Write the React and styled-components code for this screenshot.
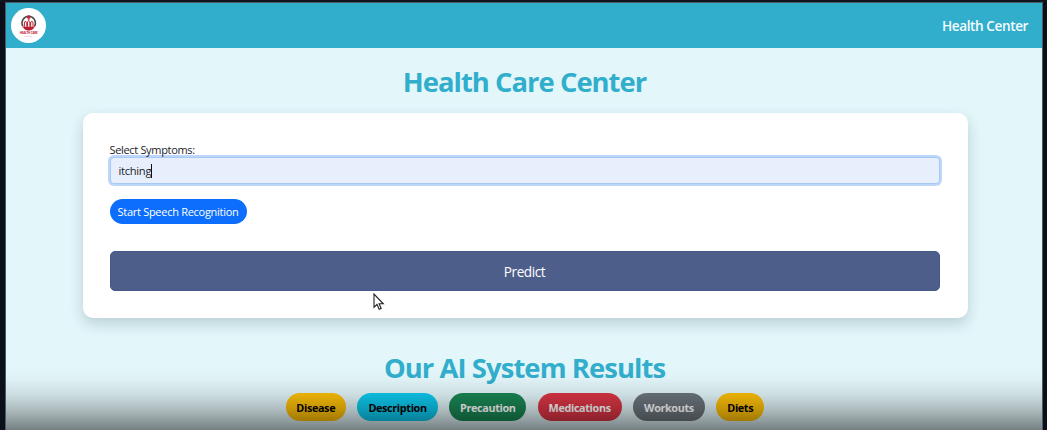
import React from "react";
import styled, { createGlobalStyle } from "styled-components";

const GlobalStyle = createGlobalStyle`
  *, *::before, *::after { box-sizing: border-box; }
  body {
    margin: 0;
    background: #0b0f19;
    font-family: "Segoe UI", "Open Sans", "Noto Sans", sans-serif;
    color: #212529;
  }
`;

const Frame = styled.div`
  height: 430px;
  padding: 0 4px 0 5px;
  border-top: 2px solid #10141f;
  overflow: hidden;
`;

const Page = styled.div`
  position: relative;
  height: 428px;
  background: #e3f6fa;
  border: solid #4a5a66;
  border-width: 1px 1px 0 1px;
  overflow: hidden;
`;

const Navbar = styled.header`
  display: flex;
  align-items: center;
  justify-content: space-between;
  height: 45px;
  padding: 0 14px 0 5px;
  background: #32aecd;
`;

const LogoBadge = styled.div`
  width: 35px;
  height: 35px;
  border-radius: 50%;
  background: #fff;
`;

const Brand = styled.span`
  color: #f4fcfe;
  font-size: 13.6px;
  font-weight: 600;
  line-height: 20px;
  letter-spacing: -0.42px;
  padding-top: 1px;
`;

const Heading = styled.h1`
  margin: 0;
  padding-left: 1px;
  color: #32aecd;
  font-size: 27.4px;
  font-weight: 700;
  line-height: 34px;
  text-align: center;
  white-space: nowrap;
  letter-spacing: ${(p) => p.$track || 0}px;
`;

const Main = styled.main`
  display: flex;
  flex-direction: column;
  align-items: center;
  padding-top: 17px;
`;

const Card = styled.form`
  display: flex;
  flex-direction: column;
  align-items: stretch;
  width: 885px;
  height: 205px;
  margin: 14px 0 33px 2px;
  padding: 29px 28px 27px 27px;
  border-radius: 10px;
  background: #fff;
  box-shadow: 0 6px 14px rgba(20, 60, 70, 0.2);
`;

const Label = styled.label`
  position: relative;
  z-index: 1;
  font-size: 11px;
  line-height: 15px;
  letter-spacing: -0.33px;
`;

const Field = styled.div`
  display: flex;
  align-items: center;
  height: 27px;
  padding: 0 8px;
  border: 1px solid #a8c8f6;
  border-radius: 4px;
  background: #e8effc;
  box-shadow: 0 0 0 2px #bdd7fb;
  font-size: 11.2px;
  letter-spacing: -0.3px;
`;

const Caret = styled.span`
  width: 1px;
  height: 14px;
  background: #111;
`;

const SpeechButton = styled.button`
  align-self: flex-start;
  width: 137px;
  height: 25px;
  margin-top: 15px;
  padding: 0;
  border: 0;
  border-radius: 13px;
  background: #0d6efd;
  color: #fff;
  font: 400 11px/25px "Segoe UI", "Open Sans", sans-serif;
  letter-spacing: -0.28px;
  white-space: nowrap;
`;

const PredictButton = styled.button`
  height: 40px;
  margin-top: 27px;
  padding: 1px 0 0;
  border: 1px solid #46578a;
  border-radius: 5px;
  background: #4d5e8b;
  color: #fff;
  font: 400 13.6px/37px "Segoe UI", "Open Sans", sans-serif;
  letter-spacing: -0.45px;
`;

const ResultTabs = styled.nav`
  display: flex;
  gap: 11.3px;
  margin: 8px 0 0 2px;
`;

const ResultTab = styled.button`
  width: ${(p) => p.$width}px;
  height: 28px;
  padding: 1px 0 0;
  border: 0;
  border-radius: 14px;
  background: ${(p) => p.$bg};
  color: ${(p) => p.$color};
  font: 700 10.8px/27px "Segoe UI", "Open Sans", sans-serif;
  letter-spacing: -0.35px;
  white-space: nowrap;
`;

const BottomShade = styled.div`
  position: absolute;
  inset: auto 0 0 0;
  height: 64px;
  background: linear-gradient(
    rgba(0, 0, 0, 0) 0%,
    rgba(0, 0, 0, 0.02) 20%,
    rgba(0, 0, 0, 0.1) 45%,
    rgba(0, 0, 0, 0.25) 70%,
    rgba(0, 0, 0, 0.48) 100%
  );
  pointer-events: none;
`;

const Pointer = styled.svg`
  position: absolute;
  left: 367px;
  top: 290px;
`;

const LogoName = styled.text`
  font: 700 2.9px "Open Sans", sans-serif;
  fill: #c4202f;
`;

const Logo = () => (
  <LogoBadge>
    <svg width="35" height="35" viewBox="0 0 35 35">
      <path d="M11.800 18.200A6.700 6.700 0 1 1 23.600 18.200" fill="none" stroke="#4b474c" strokeWidth="1.500" />
      <path d="M10.800 16.500c1 3.900 3.600 6 6.900 6s5.900-2.100 6.900-6l-1.800 2.300H12.600z" fill="#b91f30" />
      <path d="M17.700 7.200v4.600M15.900 9.300h3.600" fill="none" stroke="#c4283a" strokeWidth="1.700" />
      <path d="M12.900 18.800v-4.600l1.600-1.500 1.500 1.500 1.700-2.400 1.700 2.400 1.500-1.500 1.600 1.500v4.600z" fill="#c4283a" />
      <path d="M14.600 14.300v4.200M17.700 13.400v5.100M20.800 14.300v4.200" fill="none" stroke="#fff" strokeWidth="1.300" />
      <LogoName x="8.700" y="26.200" textLength="18">HEALTH CARE</LogoName>
      <path d="M13.500 28.300h8" stroke="#d9a7ad" strokeWidth=".5" />
    </svg>
  </LogoBadge>
);

const results = [
  { label: "Disease", width: 60, bg: "#ffc107", color: "#000" },
  { label: "Description", width: 81, bg: "#0dcaf0", color: "#000" },
  { label: "Precaution", width: 77, bg: "#198754", color: "#fff" },
  { label: "Medications", width: 84, bg: "#dc3545", color: "#fff" },
  { label: "Workouts", width: 72, bg: "#6c757d", color: "#fff" },
  { label: "Diets", width: 48, bg: "#ffc107", color: "#000" },
];

export default function App() {
  return (
    <Frame>
      <GlobalStyle />
      <Page>
        <Navbar>
          <Logo />
          <Brand>Health Center</Brand>
        </Navbar>
        <Main>
          <Heading $track={-0.97}>Health Care Center</Heading>
          <Card onSubmit={(e) => e.preventDefault()}>
            <Label>Select Symptoms:</Label>
            <Field>
              itching
              <Caret />
            </Field>
            <SpeechButton type="button">Start Speech Recognition</SpeechButton>
            <PredictButton type="submit">Predict</PredictButton>
          </Card>
          <Heading as="h2" $track={-0.92}>Our AI System Results</Heading>
          <ResultTabs>
            {results.map((r) => (
              <ResultTab key={r.label} type="button" $width={r.width} $bg={r.bg} $color={r.color}>
                {r.label}
              </ResultTab>
            ))}
          </ResultTabs>
        </Main>
        <BottomShade />
        <Pointer width="12" height="18" viewBox="0 0 12 18">
          <path d="M1 1v13.200l3-2.700 2.200 4.800 2-.9-2.100-4.600h4.200z" fill="#fff" stroke="#222" strokeWidth="1.100" />
        </Pointer>
      </Page>
    </Frame>
  );
}
